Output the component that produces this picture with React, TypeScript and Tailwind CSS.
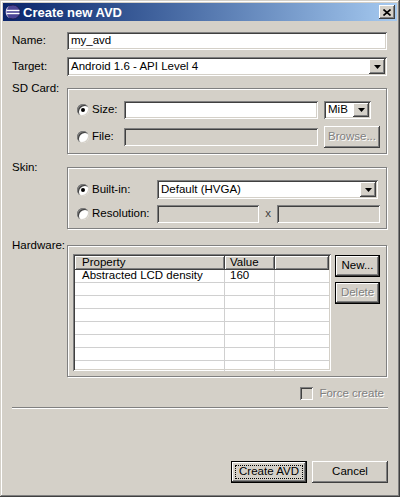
const SUNKEN =
  "shadow-[inset_1px_1px_#808080,inset_-1px_-1px_#ffffff,inset_2px_2px_#404040,inset_-2px_-2px_#d4d0c8]";
const RAISED = "shadow-[inset_-1px_-1px_#404040,inset_1px_1px_#ffffff,inset_-2px_-2px_#808080]";
const GROUP = "border border-[#808080] shadow-[inset_1px_1px_#ffffff,1px_1px_#ffffff]";
const DISABLED_TEXT = "text-[#808080] [text-shadow:1px_1px_0_#ffffff]";

function Field({ value, disabled, className }: { value?: string; disabled?: boolean; className?: string }) {
  return (
    <div className={`${SUNKEN} ${disabled ? "bg-[#d4d0c8]" : "bg-white"} flex items-center pl-[4px] ${className ?? ""}`}>
      {value}
    </div>
  );
}

function DropBtn() {
  return (
    <div className={`${RAISED} bg-[#d4d0c8] w-[16px] self-stretch flex items-center justify-center`}>
      <svg width="7" height="4" viewBox="0 0 7 4">
        <path d="M0 0h7L3.5 4z" fill="#000" />
      </svg>
    </div>
  );
}

function Combo({ value, className }: { value: string; className?: string }) {
  return (
    <div className={`${SUNKEN} bg-white flex items-stretch p-[2px] ${className ?? ""}`}>
      <span className="flex-1 flex items-center pl-[2px] whitespace-nowrap overflow-hidden">{value}</span>
      <DropBtn />
    </div>
  );
}

function Button({ label, disabled, className }: { label: string; disabled?: boolean; className?: string }) {
  return (
    <div className={`${RAISED} bg-[#d4d0c8] flex items-center justify-center ${disabled ? DISABLED_TEXT : ""} ${className ?? ""}`}>
      {label}
    </div>
  );
}

function Radio({ checked }: { checked?: boolean }) {
  return (
    <div className="w-[12px] h-[12px] shrink-0 rounded-full bg-white shadow-[inset_1px_1px_#808080,inset_-1px_-1px_#d4d0c8,inset_2px_2px_#404040] flex items-center justify-center">
      {checked && <div className="w-[4px] h-[4px] rounded-full bg-black" />}
    </div>
  );
}

function EclipseIcon() {
  return (
    <svg width="16" height="16" viewBox="0 0 16 16">
      <circle cx="8" cy="8" r="7" fill="#4b4596" stroke="#1c1848" strokeWidth="0.8" />
      <path d="M5 1.8A6.6 6.6 0 0 0 5 14.2A7.5 7.5 0 0 1 5 1.8z" fill="#c9c6ec" />
      <rect x="1.5" y="5.8" width="13" height="1.4" fill="#fff" />
      <rect x="1.5" y="8.8" width="13" height="1.4" fill="#fff" />
    </svg>
  );
}

export default function App() {
  const rows = [
    { prop: "Abstracted LCD density", value: "160" },
    { prop: "", value: "" },
    { prop: "", value: "" },
    { prop: "", value: "" },
    { prop: "", value: "" },
    { prop: "", value: "" },
    { prop: "", value: "" },
    { prop: "", value: "" },
  ];

  return (
    <div className="w-[400px] h-[497px] bg-[#d4d0c8] p-[3px] flex flex-col shadow-[inset_-1px_-1px_#404040,inset_1px_1px_#d4d0c8,inset_-2px_-2px_#808080,inset_2px_2px_#ffffff] font-['Liberation_Sans',Arial,sans-serif] text-[11.5px] text-black leading-none">
      {/* title bar */}
      <div className="h-[18px] shrink-0 bg-linear-to-r from-[#0a246a] to-[#a6caf0] flex items-center px-[2px]">
        <EclipseIcon />
        <span className="ml-[2px] text-white font-bold text-[13px]">Create new AVD</span>
        <div className={`${RAISED} ml-auto w-[16px] h-[14px] bg-[#d4d0c8] flex items-center justify-center`}>
          <svg width="8" height="7" viewBox="0 0 8 7">
            <path d="M0.5 0.5L7.5 6.5M7.5 0.5L0.5 6.5" stroke="#000" strokeWidth="1.6" />
          </svg>
        </div>
      </div>

      <div className="flex-1 flex flex-col pl-[9px] pr-[10px]">
        <div className="mt-[11px] flex h-[18px] items-center">
          <span className="w-[55px]">Name:</span>
          <Field value="my_avd" className="flex-1 self-stretch pl-[3px]" />
        </div>

        <div className="mt-[7px] flex h-[19px] items-center">
          <span className="w-[55px]">Target:</span>
          <Combo value="Android 1.6 - API Level 4" className="flex-1 self-stretch" />
        </div>

        {/* SD Card */}
        <div className="mt-[5px] flex">
          <span className="w-[55px] leading-[14px]">SD Card:</span>
          <div className={`${GROUP} flex-1 mt-[7px] pl-[9px] pt-[12px] pb-[5px] flex flex-col`}>
            <div className="flex h-[18px] items-center">
              <div className="w-[47px] flex items-center gap-[3px]">
                <Radio checked />
                <span>Size:</span>
              </div>
              <Field className="w-[194px] self-stretch" />
              <Combo value="MiB" className="ml-[6px] w-[47px] self-stretch" />
            </div>
            <div className="mt-[7px] flex h-[22px] items-center">
              <div className="w-[47px] flex items-center gap-[3px]">
                <Radio />
                <span>File:</span>
              </div>
              <Field disabled className="w-[194px] h-[18px]" />
              <Button label="Browse..." disabled className="ml-[6px] w-[56px] self-stretch" />
            </div>
          </div>
        </div>

        {/* Skin */}
        <div className="mt-[6px] flex">
          <span className="w-[55px] leading-[14px]">Skin:</span>
          <div className={`${GROUP} flex-1 mt-[7px] pl-[9px] pt-[12px] pb-[5px] flex flex-col`}>
            <div className="flex h-[19px] items-center">
              <div className="w-[80px] flex items-center gap-[3px]">
                <Radio checked />
                <span>Built-in:</span>
              </div>
              <Combo value="Default (HVGA)" className="w-[221px] self-stretch" />
            </div>
            <div className="mt-[6px] flex h-[18px] items-center">
              <div className="w-[80px] flex items-center gap-[3px]">
                <Radio />
                <span>Resolution:</span>
              </div>
              <Field disabled className="w-[102px] self-stretch" />
              <span className="w-[18px] text-center text-[#404040]">x</span>
              <Field disabled className="w-[103px] self-stretch" />
            </div>
          </div>
        </div>

        {/* Hardware */}
        <div className="mt-[9px] flex">
          <span className="w-[55px] leading-[14px]">Hardware:</span>
          <div className={`${GROUP} flex-1 mt-[7px] pl-[5px] pt-[8px] pb-[5px] flex`}>
            <div className={`${SUNKEN} bg-white w-[258px] h-[117px] p-[2px] flex flex-col overflow-hidden`}>
              <div className="flex h-[14px] shrink-0">
                <div className={`${RAISED} bg-[#d4d0c8] w-[150px] flex items-center pl-[7px]`}>Property</div>
                <div className={`${RAISED} bg-[#d4d0c8] w-[50px] flex items-center pl-[5px]`}>Value</div>
                <div className={`${RAISED} bg-[#d4d0c8] flex-1`} />
              </div>
              {rows.map((r, i) => (
                <div key={i} className="flex h-[13px] shrink-0 border-b border-[#d0d0d0]">
                  <div className="w-[150px] border-r border-[#d0d0d0] flex items-center pl-[7px] whitespace-nowrap">{r.prop}</div>
                  <div className="w-[50px] border-r border-[#d0d0d0] flex items-center pl-[5px]">{r.value}</div>
                  <div className="flex-1" />
                </div>
              ))}
            </div>
            <div className="ml-[4px] mt-[1px] flex flex-col gap-[5px]">
              <Button label="New..." className="w-[45px] h-[22px] border border-black" />
              <Button label="Delete" disabled className="w-[45px] h-[22px] border border-black" />
            </div>
          </div>
        </div>

        {/* Force create */}
        <div className="mt-[10px] flex h-[13px] items-center justify-end pr-[3px]">
          <div className={`${SUNKEN} w-[13px] h-[13px] bg-[#d4d0c8]`} />
          <span className={`ml-[6px] ${DISABLED_TEXT}`}>Force create</span>
        </div>

        <div className="mt-[7px] -mr-[1px] h-[2px] border-t border-[#808080] border-b border-b-white" />

        <div className="mt-[52px] -mr-[1px] flex justify-end gap-[5px]">
          <div className="relative w-[76px] h-[22px] border border-black">
            <Button label="Create AVD" className="w-full h-full" />
            <span className="absolute inset-[3px] border border-dotted border-black" />
          </div>
          <Button label="Cancel" className="w-[76px] h-[22px]" />
        </div>
      </div>
    </div>
  );
}
